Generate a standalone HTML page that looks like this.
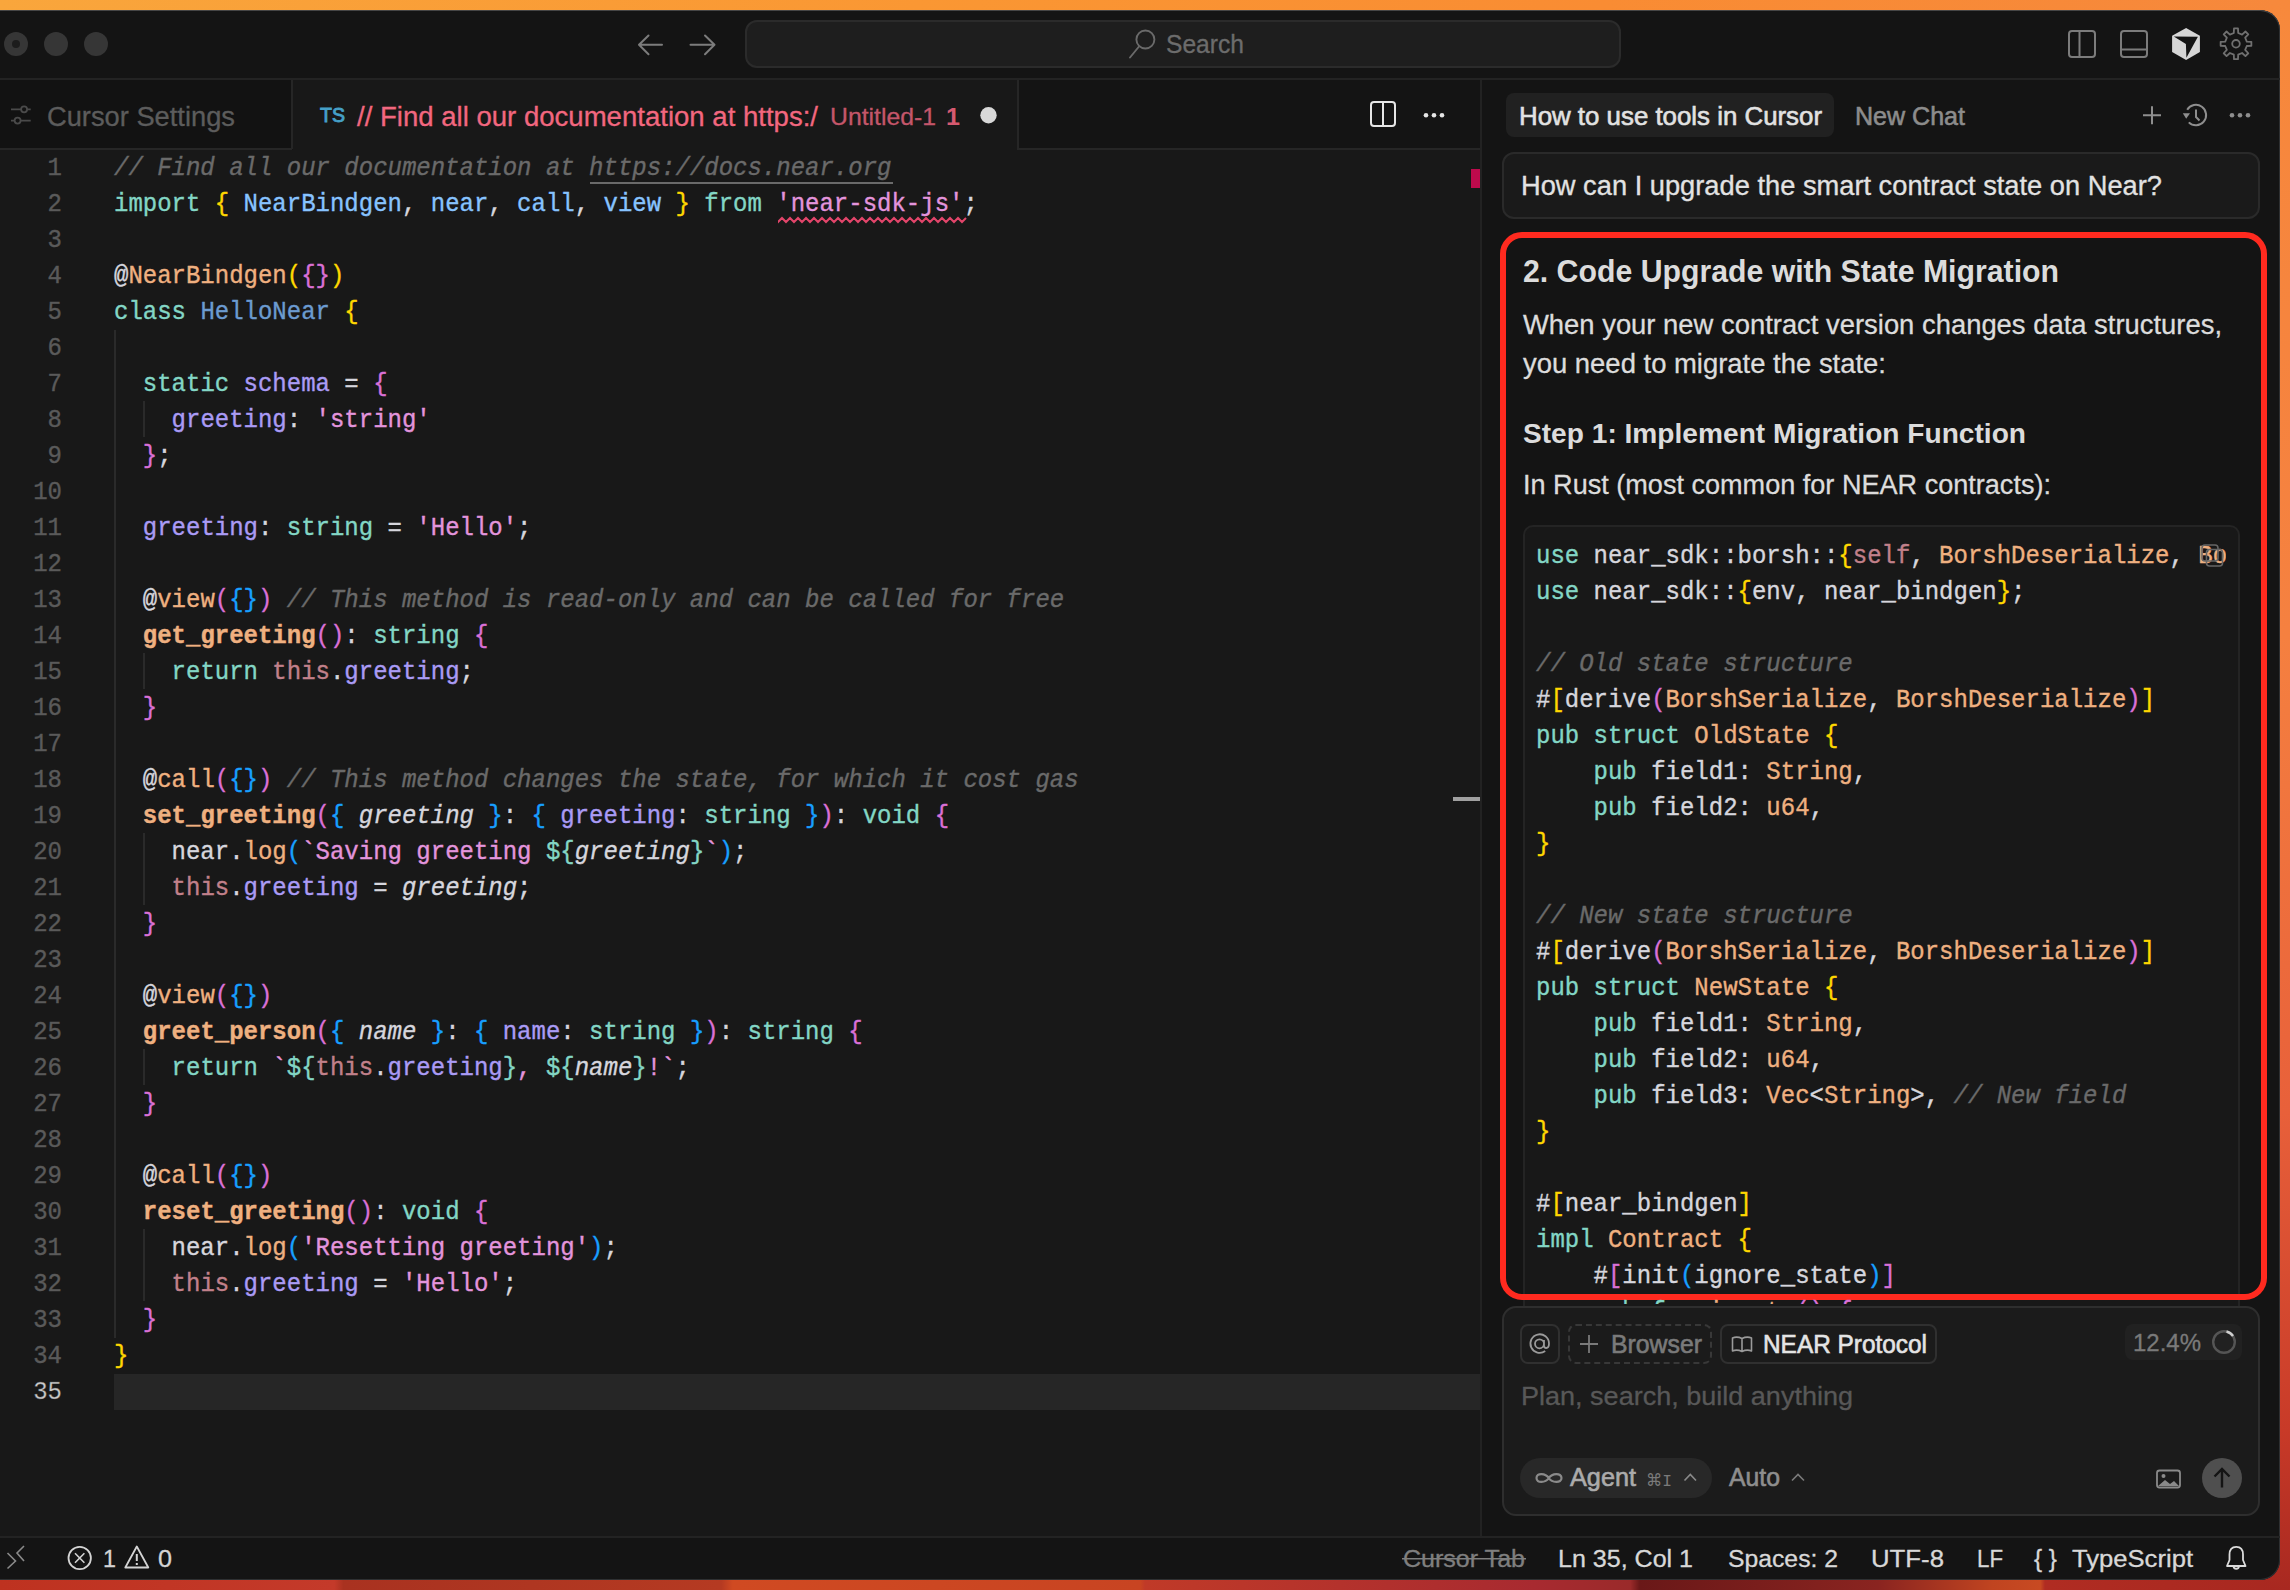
<!DOCTYPE html>
<html><head><meta charset="utf-8"><style>
html,body{margin:0;padding:0;width:2290px;height:1590px;overflow:hidden;background:#141414}
body{position:relative;font-family:"Liberation Sans",sans-serif}
</style></head><body>
<div style="position:absolute;left:0;top:0;width:2290px;height:1590px;background:linear-gradient(90deg,#f9a63c 0%,#fa9733 40%,#f98c33 70%,#f6883c 100%)"></div><div style="position:absolute;left:0;top:1560px;width:2290px;height:30px;background:linear-gradient(90deg,#be3220 0%,#c43a2a 14.6%,#a93220 15%,#b53a22 31.5%,#d04a22 32%,#c84422 49.8%,#c03a28 50%,#a82a30 67%,#9a2a2a 71.2%,#6a1818 71.6%,#8a2420 82%,#c04420 87%,#c84a22 89.1%,#b02c22 89.3%,#a82820 100%)"></div><div style="position:absolute;left:2270px;top:0;width:20px;height:1590px;background:linear-gradient(180deg,#f7893c 0%,#f58040 40%,#e8603a 70%,#c83a28 90%,#a82820 100%)"></div><div style="position:absolute;left:-30px;top:10px;width:2310px;height:1570px;background:#141414;border-radius:20px;overflow:hidden;box-shadow:inset 0 1px 0 0 #454545,inset 0 0 0 1px #2e3032"></div><div style="position:absolute;left:0px;top:78px;width:2280px;height:2px;background:#232323"></div><div style="position:absolute;left:4px;top:32px;width:24px;height:24px;background:#363636;border-radius:50%"></div><div style="position:absolute;left:44px;top:32px;width:24px;height:24px;background:#363636;border-radius:50%"></div><div style="position:absolute;left:84px;top:32px;width:24px;height:24px;background:#363636;border-radius:50%"></div><div style="position:absolute;left:12px;top:40px;width:8px;height:8px;background:#1c1c1c;border-radius:50%"></div><div style="position:absolute;left:745px;top:20px;width:876px;height:48px;background:#1e1e1e;border:2px solid #2b2b2b;border-radius:12px;box-sizing:border-box"></div><div style="position:absolute;left:0px;top:80px;width:292px;height:69px;background:#121212"></div><div style="position:absolute;left:291px;top:80px;width:2px;height:69px;background:#262626"></div><div style="position:absolute;left:0px;top:148px;width:292px;height:2px;background:#262626"></div><div style="position:absolute;left:293px;top:80px;width:725px;height:70px;background:#181818"></div><div style="position:absolute;left:1018px;top:148px;width:464px;height:2px;background:#262626"></div><div style="position:absolute;left:1017px;top:80px;width:2px;height:70px;background:#262626"></div><div style="position:absolute;left:0px;top:150px;width:1480px;height:1387px;background:#181818"></div><div style="position:absolute;left:114px;top:1374px;width:1366px;height:36px;background:#262626"></div><div style="position:absolute;left:1480px;top:80px;width:2px;height:1457px;background:#222222"></div><div style="position:absolute;left:0px;top:1536px;width:2280px;height:2px;background:#232323"></div><div style="position:absolute;left:114px;top:330px;width:2px;height:1008px;background:#2a2a2a"></div><div style="position:absolute;left:143px;top:401px;width:2px;height:36px;background:#2a2a2a"></div><div style="position:absolute;left:143px;top:653px;width:2px;height:36px;background:#2a2a2a"></div><div style="position:absolute;left:143px;top:833px;width:2px;height:72px;background:#2a2a2a"></div><div style="position:absolute;left:143px;top:1049px;width:2px;height:36px;background:#2a2a2a"></div><div style="position:absolute;left:143px;top:1229px;width:2px;height:72px;background:#2a2a2a"></div><div style="position:absolute;left:590px;top:182px;width:303px;height:2px;background:#6a6a6a"></div><svg style="position:absolute;left:778px;top:216px" width="190" height="8"><path d="M0 5 L0 6 L4 2 L8 6 L12 2 L16 6 L20 2 L24 6 L28 2 L32 6 L36 2 L40 6 L44 2 L48 6 L52 2 L56 6 L60 2 L64 6 L68 2 L72 6 L76 2 L80 6 L84 2 L88 6 L92 2 L96 6 L100 2 L104 6 L108 2 L112 6 L116 2 L120 6 L124 2 L128 6 L132 2 L136 6 L140 2 L144 6 L148 2 L152 6 L156 2 L160 6 L164 2 L168 6 L172 2 L176 6 L180 2 L184 6 L188 2" stroke="#e2456a" stroke-width="2" fill="none"/></svg><div style="position:absolute;left:1471px;top:169px;width:9px;height:19px;background:#be0a4c"></div><div style="position:absolute;left:1453px;top:797px;width:27px;height:4px;background:#a0a0a0"></div><div style="position:absolute;left:1506px;top:93px;width:328px;height:44px;background:#212121;border-radius:8px"></div><div style="position:absolute;left:1502px;top:152px;width:758px;height:67px;background:#1a1a1a;border:2px solid #2a2a2a;border-radius:12px;box-sizing:border-box"></div><div style="position:absolute;left:1523px;top:525px;width:717px;height:800px;background:#181818;border:2px solid #242424;border-radius:10px;box-sizing:border-box"></div><div style="position:absolute;left:1500px;top:232px;width:767px;height:1068px;border:6px solid #ff2a1f;border-radius:22px;box-sizing:border-box"></div><div style="position:absolute;left:1502px;top:1306px;width:758px;height:210px;background:#1b1b1b;border:2px solid #2e2e2e;border-radius:14px;box-sizing:border-box"></div><div style="position:absolute;left:1520px;top:1324px;width:40px;height:40px;border:2px solid #303030;border-radius:8px;box-sizing:border-box"></div><div style="position:absolute;left:1568px;top:1324px;width:144px;height:40px;border:2px dashed #383838;border-radius:8px;box-sizing:border-box"></div><div style="position:absolute;left:1720px;top:1324px;width:217px;height:40px;border:2px solid #303030;border-radius:8px;box-sizing:border-box"></div><div style="position:absolute;left:2125px;top:1324px;width:117px;height:36px;background:#212121;border-radius:8px"></div><div style="position:absolute;left:1520px;top:1458px;width:192px;height:40px;background:#282828;border-radius:20px"></div><div style="position:absolute;left:2202px;top:1458px;width:40px;height:40px;background:#4f4f4f;border-radius:50%"></div></div>
<svg style="position:absolute;left:0;top:0;z-index:10" width="2290" height="1590">
<defs><clipPath id="chatclip"><rect x="1500" y="150" width="726" height="1154"/></clipPath></defs>
<text x="62" y="175" font-family="Liberation Mono" font-size="24" fill="#5a5a5a" font-weight="400" text-anchor="end" transform="matrix(1 0 0 1.08 0 -14.00)" stroke="#5a5a5a" stroke-width="0.35">1</text><g><text x="114" y="175" transform="matrix(1 0 0 1.08 0 -14.00)" font-family="Liberation Mono" font-size="24" stroke-width="0.35" style="text-decoration-skip-ink:none" xml:space="preserve"><tspan fill="#6a6a6a" stroke="#6a6a6a" font-style="italic">// Find all our documentation at </tspan><tspan fill="#6a6a6a" stroke="#6a6a6a" font-style="italic">https://docs.near.org</tspan></text></g><text x="62" y="211" font-family="Liberation Mono" font-size="24" fill="#5a5a5a" font-weight="400" text-anchor="end" transform="matrix(1 0 0 1.08 0 -16.88)" stroke="#5a5a5a" stroke-width="0.35">2</text><g><text x="114" y="211" transform="matrix(1 0 0 1.08 0 -16.88)" font-family="Liberation Mono" font-size="24" stroke-width="0.35" style="text-decoration-skip-ink:none" xml:space="preserve"><tspan fill="#83d6c5" stroke="#83d6c5">import</tspan><tspan fill="#d6d6dd" stroke="#d6d6dd"> </tspan><tspan fill="#ffd700" stroke="#ffd700">{</tspan><tspan fill="#d6d6dd" stroke="#d6d6dd"> </tspan><tspan fill="#87c3ff" stroke="#87c3ff">NearBindgen</tspan><tspan fill="#d6d6dd" stroke="#d6d6dd">, </tspan><tspan fill="#87c3ff" stroke="#87c3ff">near</tspan><tspan fill="#d6d6dd" stroke="#d6d6dd">, </tspan><tspan fill="#87c3ff" stroke="#87c3ff">call</tspan><tspan fill="#d6d6dd" stroke="#d6d6dd">, </tspan><tspan fill="#87c3ff" stroke="#87c3ff">view</tspan><tspan fill="#d6d6dd" stroke="#d6d6dd"> </tspan><tspan fill="#ffd700" stroke="#ffd700">}</tspan><tspan fill="#d6d6dd" stroke="#d6d6dd"> </tspan><tspan fill="#83d6c5" stroke="#83d6c5">from</tspan><tspan fill="#d6d6dd" stroke="#d6d6dd"> </tspan><tspan fill="#e394dc" stroke="#e394dc">&#x27;near-sdk-js&#x27;</tspan><tspan fill="#d6d6dd" stroke="#d6d6dd">;</tspan></text></g><text x="62" y="247" font-family="Liberation Mono" font-size="24" fill="#5a5a5a" font-weight="400" text-anchor="end" transform="matrix(1 0 0 1.08 0 -19.76)" stroke="#5a5a5a" stroke-width="0.35">3</text><text x="62" y="283" font-family="Liberation Mono" font-size="24" fill="#5a5a5a" font-weight="400" text-anchor="end" transform="matrix(1 0 0 1.08 0 -22.64)" stroke="#5a5a5a" stroke-width="0.35">4</text><g><text x="114" y="283" transform="matrix(1 0 0 1.08 0 -22.64)" font-family="Liberation Mono" font-size="24" stroke-width="0.35" style="text-decoration-skip-ink:none" xml:space="preserve"><tspan fill="#d6d6dd" stroke="#d6d6dd">@</tspan><tspan fill="#efb080" stroke="#efb080">NearBindgen</tspan><tspan fill="#ffd700" stroke="#ffd700">(</tspan><tspan fill="#da70d6" stroke="#da70d6">{</tspan><tspan fill="#da70d6" stroke="#da70d6">}</tspan><tspan fill="#ffd700" stroke="#ffd700">)</tspan></text></g><text x="62" y="319" font-family="Liberation Mono" font-size="24" fill="#5a5a5a" font-weight="400" text-anchor="end" transform="matrix(1 0 0 1.08 0 -25.52)" stroke="#5a5a5a" stroke-width="0.35">5</text><g><text x="114" y="319" transform="matrix(1 0 0 1.08 0 -25.52)" font-family="Liberation Mono" font-size="24" stroke-width="0.35" style="text-decoration-skip-ink:none" xml:space="preserve"><tspan fill="#83d6c5" stroke="#83d6c5">class</tspan><tspan fill="#d6d6dd" stroke="#d6d6dd"> </tspan><tspan fill="#6b9bd0" stroke="#6b9bd0">HelloNear</tspan><tspan fill="#d6d6dd" stroke="#d6d6dd"> </tspan><tspan fill="#ffd700" stroke="#ffd700">{</tspan></text></g><text x="62" y="355" font-family="Liberation Mono" font-size="24" fill="#5a5a5a" font-weight="400" text-anchor="end" transform="matrix(1 0 0 1.08 0 -28.40)" stroke="#5a5a5a" stroke-width="0.35">6</text><text x="62" y="391" font-family="Liberation Mono" font-size="24" fill="#5a5a5a" font-weight="400" text-anchor="end" transform="matrix(1 0 0 1.08 0 -31.28)" stroke="#5a5a5a" stroke-width="0.35">7</text><g><text x="114" y="391" transform="matrix(1 0 0 1.08 0 -31.28)" font-family="Liberation Mono" font-size="24" stroke-width="0.35" style="text-decoration-skip-ink:none" xml:space="preserve"><tspan fill="#d6d6dd" stroke="#d6d6dd">  </tspan><tspan fill="#83d6c5" stroke="#83d6c5">static</tspan><tspan fill="#d6d6dd" stroke="#d6d6dd"> </tspan><tspan fill="#aa9bf5" stroke="#aa9bf5">schema</tspan><tspan fill="#d6d6dd" stroke="#d6d6dd"> = </tspan><tspan fill="#da70d6" stroke="#da70d6">{</tspan></text></g><text x="62" y="427" font-family="Liberation Mono" font-size="24" fill="#5a5a5a" font-weight="400" text-anchor="end" transform="matrix(1 0 0 1.08 0 -34.16)" stroke="#5a5a5a" stroke-width="0.35">8</text><g><text x="114" y="427" transform="matrix(1 0 0 1.08 0 -34.16)" font-family="Liberation Mono" font-size="24" stroke-width="0.35" style="text-decoration-skip-ink:none" xml:space="preserve"><tspan fill="#d6d6dd" stroke="#d6d6dd">    </tspan><tspan fill="#aa9bf5" stroke="#aa9bf5">greeting</tspan><tspan fill="#d6d6dd" stroke="#d6d6dd">: </tspan><tspan fill="#e394dc" stroke="#e394dc">&#x27;string&#x27;</tspan></text></g><text x="62" y="463" font-family="Liberation Mono" font-size="24" fill="#5a5a5a" font-weight="400" text-anchor="end" transform="matrix(1 0 0 1.08 0 -37.04)" stroke="#5a5a5a" stroke-width="0.35">9</text><g><text x="114" y="463" transform="matrix(1 0 0 1.08 0 -37.04)" font-family="Liberation Mono" font-size="24" stroke-width="0.35" style="text-decoration-skip-ink:none" xml:space="preserve"><tspan fill="#d6d6dd" stroke="#d6d6dd">  </tspan><tspan fill="#da70d6" stroke="#da70d6">}</tspan><tspan fill="#d6d6dd" stroke="#d6d6dd">;</tspan></text></g><text x="62" y="499" font-family="Liberation Mono" font-size="24" fill="#5a5a5a" font-weight="400" text-anchor="end" transform="matrix(1 0 0 1.08 0 -39.92)" stroke="#5a5a5a" stroke-width="0.35">10</text><text x="62" y="535" font-family="Liberation Mono" font-size="24" fill="#5a5a5a" font-weight="400" text-anchor="end" transform="matrix(1 0 0 1.08 0 -42.80)" stroke="#5a5a5a" stroke-width="0.35">11</text><g><text x="114" y="535" transform="matrix(1 0 0 1.08 0 -42.80)" font-family="Liberation Mono" font-size="24" stroke-width="0.35" style="text-decoration-skip-ink:none" xml:space="preserve"><tspan fill="#d6d6dd" stroke="#d6d6dd">  </tspan><tspan fill="#aa9bf5" stroke="#aa9bf5">greeting</tspan><tspan fill="#d6d6dd" stroke="#d6d6dd">: </tspan><tspan fill="#83d6c5" stroke="#83d6c5">string</tspan><tspan fill="#d6d6dd" stroke="#d6d6dd"> = </tspan><tspan fill="#e394dc" stroke="#e394dc">&#x27;Hello&#x27;</tspan><tspan fill="#d6d6dd" stroke="#d6d6dd">;</tspan></text></g><text x="62" y="571" font-family="Liberation Mono" font-size="24" fill="#5a5a5a" font-weight="400" text-anchor="end" transform="matrix(1 0 0 1.08 0 -45.68)" stroke="#5a5a5a" stroke-width="0.35">12</text><text x="62" y="607" font-family="Liberation Mono" font-size="24" fill="#5a5a5a" font-weight="400" text-anchor="end" transform="matrix(1 0 0 1.08 0 -48.56)" stroke="#5a5a5a" stroke-width="0.35">13</text><g><text x="114" y="607" transform="matrix(1 0 0 1.08 0 -48.56)" font-family="Liberation Mono" font-size="24" stroke-width="0.35" style="text-decoration-skip-ink:none" xml:space="preserve"><tspan fill="#d6d6dd" stroke="#d6d6dd">  @</tspan><tspan fill="#efb080" stroke="#efb080">view</tspan><tspan fill="#da70d6" stroke="#da70d6">(</tspan><tspan fill="#179fff" stroke="#179fff">{}</tspan><tspan fill="#da70d6" stroke="#da70d6">)</tspan><tspan fill="#d6d6dd" stroke="#d6d6dd"> </tspan><tspan fill="#6a6a6a" stroke="#6a6a6a" font-style="italic">// This method is read-only and can be called for free</tspan></text></g><text x="62" y="643" font-family="Liberation Mono" font-size="24" fill="#5a5a5a" font-weight="400" text-anchor="end" transform="matrix(1 0 0 1.08 0 -51.44)" stroke="#5a5a5a" stroke-width="0.35">14</text><g><text x="114" y="643" transform="matrix(1 0 0 1.08 0 -51.44)" font-family="Liberation Mono" font-size="24" stroke-width="0.35" style="text-decoration-skip-ink:none" xml:space="preserve"><tspan fill="#d6d6dd" stroke="#d6d6dd">  </tspan><tspan fill="#efb080" stroke="#efb080" font-weight="700">get_greeting</tspan><tspan fill="#da70d6" stroke="#da70d6">()</tspan><tspan fill="#d6d6dd" stroke="#d6d6dd">: </tspan><tspan fill="#83d6c5" stroke="#83d6c5">string</tspan><tspan fill="#d6d6dd" stroke="#d6d6dd"> </tspan><tspan fill="#da70d6" stroke="#da70d6">{</tspan></text></g><text x="62" y="679" font-family="Liberation Mono" font-size="24" fill="#5a5a5a" font-weight="400" text-anchor="end" transform="matrix(1 0 0 1.08 0 -54.32)" stroke="#5a5a5a" stroke-width="0.35">15</text><g><text x="114" y="679" transform="matrix(1 0 0 1.08 0 -54.32)" font-family="Liberation Mono" font-size="24" stroke-width="0.35" style="text-decoration-skip-ink:none" xml:space="preserve"><tspan fill="#d6d6dd" stroke="#d6d6dd">    </tspan><tspan fill="#83d6c5" stroke="#83d6c5">return</tspan><tspan fill="#d6d6dd" stroke="#d6d6dd"> </tspan><tspan fill="#c1808a" stroke="#c1808a">this</tspan><tspan fill="#d6d6dd" stroke="#d6d6dd">.</tspan><tspan fill="#aa9bf5" stroke="#aa9bf5">greeting</tspan><tspan fill="#d6d6dd" stroke="#d6d6dd">;</tspan></text></g><text x="62" y="715" font-family="Liberation Mono" font-size="24" fill="#5a5a5a" font-weight="400" text-anchor="end" transform="matrix(1 0 0 1.08 0 -57.20)" stroke="#5a5a5a" stroke-width="0.35">16</text><g><text x="114" y="715" transform="matrix(1 0 0 1.08 0 -57.20)" font-family="Liberation Mono" font-size="24" stroke-width="0.35" style="text-decoration-skip-ink:none" xml:space="preserve"><tspan fill="#d6d6dd" stroke="#d6d6dd">  </tspan><tspan fill="#da70d6" stroke="#da70d6">}</tspan></text></g><text x="62" y="751" font-family="Liberation Mono" font-size="24" fill="#5a5a5a" font-weight="400" text-anchor="end" transform="matrix(1 0 0 1.08 0 -60.08)" stroke="#5a5a5a" stroke-width="0.35">17</text><text x="62" y="787" font-family="Liberation Mono" font-size="24" fill="#5a5a5a" font-weight="400" text-anchor="end" transform="matrix(1 0 0 1.08 0 -62.96)" stroke="#5a5a5a" stroke-width="0.35">18</text><g><text x="114" y="787" transform="matrix(1 0 0 1.08 0 -62.96)" font-family="Liberation Mono" font-size="24" stroke-width="0.35" style="text-decoration-skip-ink:none" xml:space="preserve"><tspan fill="#d6d6dd" stroke="#d6d6dd">  @</tspan><tspan fill="#efb080" stroke="#efb080">call</tspan><tspan fill="#da70d6" stroke="#da70d6">(</tspan><tspan fill="#179fff" stroke="#179fff">{}</tspan><tspan fill="#da70d6" stroke="#da70d6">)</tspan><tspan fill="#d6d6dd" stroke="#d6d6dd"> </tspan><tspan fill="#6a6a6a" stroke="#6a6a6a" font-style="italic">// This method changes the state, for which it cost gas</tspan></text></g><text x="62" y="823" font-family="Liberation Mono" font-size="24" fill="#5a5a5a" font-weight="400" text-anchor="end" transform="matrix(1 0 0 1.08 0 -65.84)" stroke="#5a5a5a" stroke-width="0.35">19</text><g><text x="114" y="823" transform="matrix(1 0 0 1.08 0 -65.84)" font-family="Liberation Mono" font-size="24" stroke-width="0.35" style="text-decoration-skip-ink:none" xml:space="preserve"><tspan fill="#d6d6dd" stroke="#d6d6dd">  </tspan><tspan fill="#efb080" stroke="#efb080" font-weight="700">set_greeting</tspan><tspan fill="#da70d6" stroke="#da70d6">(</tspan><tspan fill="#179fff" stroke="#179fff">{</tspan><tspan fill="#d6d6dd" stroke="#d6d6dd"> </tspan><tspan fill="#d6d6dd" stroke="#d6d6dd" font-style="italic">greeting</tspan><tspan fill="#d6d6dd" stroke="#d6d6dd"> </tspan><tspan fill="#179fff" stroke="#179fff">}</tspan><tspan fill="#d6d6dd" stroke="#d6d6dd">: </tspan><tspan fill="#179fff" stroke="#179fff">{</tspan><tspan fill="#d6d6dd" stroke="#d6d6dd"> </tspan><tspan fill="#aa9bf5" stroke="#aa9bf5">greeting</tspan><tspan fill="#d6d6dd" stroke="#d6d6dd">: </tspan><tspan fill="#83d6c5" stroke="#83d6c5">string</tspan><tspan fill="#d6d6dd" stroke="#d6d6dd"> </tspan><tspan fill="#179fff" stroke="#179fff">}</tspan><tspan fill="#da70d6" stroke="#da70d6">)</tspan><tspan fill="#d6d6dd" stroke="#d6d6dd">: </tspan><tspan fill="#83d6c5" stroke="#83d6c5">void</tspan><tspan fill="#d6d6dd" stroke="#d6d6dd"> </tspan><tspan fill="#da70d6" stroke="#da70d6">{</tspan></text></g><text x="62" y="859" font-family="Liberation Mono" font-size="24" fill="#5a5a5a" font-weight="400" text-anchor="end" transform="matrix(1 0 0 1.08 0 -68.72)" stroke="#5a5a5a" stroke-width="0.35">20</text><g><text x="114" y="859" transform="matrix(1 0 0 1.08 0 -68.72)" font-family="Liberation Mono" font-size="24" stroke-width="0.35" style="text-decoration-skip-ink:none" xml:space="preserve"><tspan fill="#d6d6dd" stroke="#d6d6dd">    near.</tspan><tspan fill="#efb080" stroke="#efb080">log</tspan><tspan fill="#179fff" stroke="#179fff">(</tspan><tspan fill="#e394dc" stroke="#e394dc">`Saving greeting </tspan><tspan fill="#83d6c5" stroke="#83d6c5">${</tspan><tspan fill="#d6d6dd" stroke="#d6d6dd" font-style="italic">greeting</tspan><tspan fill="#83d6c5" stroke="#83d6c5">}</tspan><tspan fill="#e394dc" stroke="#e394dc">`</tspan><tspan fill="#179fff" stroke="#179fff">)</tspan><tspan fill="#d6d6dd" stroke="#d6d6dd">;</tspan></text></g><text x="62" y="895" font-family="Liberation Mono" font-size="24" fill="#5a5a5a" font-weight="400" text-anchor="end" transform="matrix(1 0 0 1.08 0 -71.60)" stroke="#5a5a5a" stroke-width="0.35">21</text><g><text x="114" y="895" transform="matrix(1 0 0 1.08 0 -71.60)" font-family="Liberation Mono" font-size="24" stroke-width="0.35" style="text-decoration-skip-ink:none" xml:space="preserve"><tspan fill="#d6d6dd" stroke="#d6d6dd">    </tspan><tspan fill="#c1808a" stroke="#c1808a">this</tspan><tspan fill="#d6d6dd" stroke="#d6d6dd">.</tspan><tspan fill="#aa9bf5" stroke="#aa9bf5">greeting</tspan><tspan fill="#d6d6dd" stroke="#d6d6dd"> = </tspan><tspan fill="#d6d6dd" stroke="#d6d6dd" font-style="italic">greeting</tspan><tspan fill="#d6d6dd" stroke="#d6d6dd">;</tspan></text></g><text x="62" y="931" font-family="Liberation Mono" font-size="24" fill="#5a5a5a" font-weight="400" text-anchor="end" transform="matrix(1 0 0 1.08 0 -74.48)" stroke="#5a5a5a" stroke-width="0.35">22</text><g><text x="114" y="931" transform="matrix(1 0 0 1.08 0 -74.48)" font-family="Liberation Mono" font-size="24" stroke-width="0.35" style="text-decoration-skip-ink:none" xml:space="preserve"><tspan fill="#d6d6dd" stroke="#d6d6dd">  </tspan><tspan fill="#da70d6" stroke="#da70d6">}</tspan></text></g><text x="62" y="967" font-family="Liberation Mono" font-size="24" fill="#5a5a5a" font-weight="400" text-anchor="end" transform="matrix(1 0 0 1.08 0 -77.36)" stroke="#5a5a5a" stroke-width="0.35">23</text><text x="62" y="1003" font-family="Liberation Mono" font-size="24" fill="#5a5a5a" font-weight="400" text-anchor="end" transform="matrix(1 0 0 1.08 0 -80.24)" stroke="#5a5a5a" stroke-width="0.35">24</text><g><text x="114" y="1003" transform="matrix(1 0 0 1.08 0 -80.24)" font-family="Liberation Mono" font-size="24" stroke-width="0.35" style="text-decoration-skip-ink:none" xml:space="preserve"><tspan fill="#d6d6dd" stroke="#d6d6dd">  @</tspan><tspan fill="#efb080" stroke="#efb080">view</tspan><tspan fill="#da70d6" stroke="#da70d6">(</tspan><tspan fill="#179fff" stroke="#179fff">{}</tspan><tspan fill="#da70d6" stroke="#da70d6">)</tspan></text></g><text x="62" y="1039" font-family="Liberation Mono" font-size="24" fill="#5a5a5a" font-weight="400" text-anchor="end" transform="matrix(1 0 0 1.08 0 -83.12)" stroke="#5a5a5a" stroke-width="0.35">25</text><g><text x="114" y="1039" transform="matrix(1 0 0 1.08 0 -83.12)" font-family="Liberation Mono" font-size="24" stroke-width="0.35" style="text-decoration-skip-ink:none" xml:space="preserve"><tspan fill="#d6d6dd" stroke="#d6d6dd">  </tspan><tspan fill="#efb080" stroke="#efb080" font-weight="700">greet_person</tspan><tspan fill="#da70d6" stroke="#da70d6">(</tspan><tspan fill="#179fff" stroke="#179fff">{</tspan><tspan fill="#d6d6dd" stroke="#d6d6dd"> </tspan><tspan fill="#d6d6dd" stroke="#d6d6dd" font-style="italic">name</tspan><tspan fill="#d6d6dd" stroke="#d6d6dd"> </tspan><tspan fill="#179fff" stroke="#179fff">}</tspan><tspan fill="#d6d6dd" stroke="#d6d6dd">: </tspan><tspan fill="#179fff" stroke="#179fff">{</tspan><tspan fill="#d6d6dd" stroke="#d6d6dd"> </tspan><tspan fill="#aa9bf5" stroke="#aa9bf5">name</tspan><tspan fill="#d6d6dd" stroke="#d6d6dd">: </tspan><tspan fill="#83d6c5" stroke="#83d6c5">string</tspan><tspan fill="#d6d6dd" stroke="#d6d6dd"> </tspan><tspan fill="#179fff" stroke="#179fff">}</tspan><tspan fill="#da70d6" stroke="#da70d6">)</tspan><tspan fill="#d6d6dd" stroke="#d6d6dd">: </tspan><tspan fill="#83d6c5" stroke="#83d6c5">string</tspan><tspan fill="#d6d6dd" stroke="#d6d6dd"> </tspan><tspan fill="#da70d6" stroke="#da70d6">{</tspan></text></g><text x="62" y="1075" font-family="Liberation Mono" font-size="24" fill="#5a5a5a" font-weight="400" text-anchor="end" transform="matrix(1 0 0 1.08 0 -86.00)" stroke="#5a5a5a" stroke-width="0.35">26</text><g><text x="114" y="1075" transform="matrix(1 0 0 1.08 0 -86.00)" font-family="Liberation Mono" font-size="24" stroke-width="0.35" style="text-decoration-skip-ink:none" xml:space="preserve"><tspan fill="#d6d6dd" stroke="#d6d6dd">    </tspan><tspan fill="#83d6c5" stroke="#83d6c5">return</tspan><tspan fill="#d6d6dd" stroke="#d6d6dd"> </tspan><tspan fill="#e394dc" stroke="#e394dc">`</tspan><tspan fill="#83d6c5" stroke="#83d6c5">${</tspan><tspan fill="#c1808a" stroke="#c1808a">this</tspan><tspan fill="#d6d6dd" stroke="#d6d6dd">.</tspan><tspan fill="#aa9bf5" stroke="#aa9bf5">greeting</tspan><tspan fill="#83d6c5" stroke="#83d6c5">}</tspan><tspan fill="#e394dc" stroke="#e394dc">, </tspan><tspan fill="#83d6c5" stroke="#83d6c5">${</tspan><tspan fill="#d6d6dd" stroke="#d6d6dd" font-style="italic">name</tspan><tspan fill="#83d6c5" stroke="#83d6c5">}</tspan><tspan fill="#e394dc" stroke="#e394dc">!`</tspan><tspan fill="#d6d6dd" stroke="#d6d6dd">;</tspan></text></g><text x="62" y="1111" font-family="Liberation Mono" font-size="24" fill="#5a5a5a" font-weight="400" text-anchor="end" transform="matrix(1 0 0 1.08 0 -88.88)" stroke="#5a5a5a" stroke-width="0.35">27</text><g><text x="114" y="1111" transform="matrix(1 0 0 1.08 0 -88.88)" font-family="Liberation Mono" font-size="24" stroke-width="0.35" style="text-decoration-skip-ink:none" xml:space="preserve"><tspan fill="#d6d6dd" stroke="#d6d6dd">  </tspan><tspan fill="#da70d6" stroke="#da70d6">}</tspan></text></g><text x="62" y="1147" font-family="Liberation Mono" font-size="24" fill="#5a5a5a" font-weight="400" text-anchor="end" transform="matrix(1 0 0 1.08 0 -91.76)" stroke="#5a5a5a" stroke-width="0.35">28</text><text x="62" y="1183" font-family="Liberation Mono" font-size="24" fill="#5a5a5a" font-weight="400" text-anchor="end" transform="matrix(1 0 0 1.08 0 -94.64)" stroke="#5a5a5a" stroke-width="0.35">29</text><g><text x="114" y="1183" transform="matrix(1 0 0 1.08 0 -94.64)" font-family="Liberation Mono" font-size="24" stroke-width="0.35" style="text-decoration-skip-ink:none" xml:space="preserve"><tspan fill="#d6d6dd" stroke="#d6d6dd">  @</tspan><tspan fill="#efb080" stroke="#efb080">call</tspan><tspan fill="#da70d6" stroke="#da70d6">(</tspan><tspan fill="#179fff" stroke="#179fff">{}</tspan><tspan fill="#da70d6" stroke="#da70d6">)</tspan></text></g><text x="62" y="1219" font-family="Liberation Mono" font-size="24" fill="#5a5a5a" font-weight="400" text-anchor="end" transform="matrix(1 0 0 1.08 0 -97.52)" stroke="#5a5a5a" stroke-width="0.35">30</text><g><text x="114" y="1219" transform="matrix(1 0 0 1.08 0 -97.52)" font-family="Liberation Mono" font-size="24" stroke-width="0.35" style="text-decoration-skip-ink:none" xml:space="preserve"><tspan fill="#d6d6dd" stroke="#d6d6dd">  </tspan><tspan fill="#efb080" stroke="#efb080" font-weight="700">reset_greeting</tspan><tspan fill="#da70d6" stroke="#da70d6">()</tspan><tspan fill="#d6d6dd" stroke="#d6d6dd">: </tspan><tspan fill="#83d6c5" stroke="#83d6c5">void</tspan><tspan fill="#d6d6dd" stroke="#d6d6dd"> </tspan><tspan fill="#da70d6" stroke="#da70d6">{</tspan></text></g><text x="62" y="1255" font-family="Liberation Mono" font-size="24" fill="#5a5a5a" font-weight="400" text-anchor="end" transform="matrix(1 0 0 1.08 0 -100.40)" stroke="#5a5a5a" stroke-width="0.35">31</text><g><text x="114" y="1255" transform="matrix(1 0 0 1.08 0 -100.40)" font-family="Liberation Mono" font-size="24" stroke-width="0.35" style="text-decoration-skip-ink:none" xml:space="preserve"><tspan fill="#d6d6dd" stroke="#d6d6dd">    near.</tspan><tspan fill="#efb080" stroke="#efb080">log</tspan><tspan fill="#179fff" stroke="#179fff">(</tspan><tspan fill="#e394dc" stroke="#e394dc">&#x27;Resetting greeting&#x27;</tspan><tspan fill="#179fff" stroke="#179fff">)</tspan><tspan fill="#d6d6dd" stroke="#d6d6dd">;</tspan></text></g><text x="62" y="1291" font-family="Liberation Mono" font-size="24" fill="#5a5a5a" font-weight="400" text-anchor="end" transform="matrix(1 0 0 1.08 0 -103.28)" stroke="#5a5a5a" stroke-width="0.35">32</text><g><text x="114" y="1291" transform="matrix(1 0 0 1.08 0 -103.28)" font-family="Liberation Mono" font-size="24" stroke-width="0.35" style="text-decoration-skip-ink:none" xml:space="preserve"><tspan fill="#d6d6dd" stroke="#d6d6dd">    </tspan><tspan fill="#c1808a" stroke="#c1808a">this</tspan><tspan fill="#d6d6dd" stroke="#d6d6dd">.</tspan><tspan fill="#aa9bf5" stroke="#aa9bf5">greeting</tspan><tspan fill="#d6d6dd" stroke="#d6d6dd"> = </tspan><tspan fill="#e394dc" stroke="#e394dc">&#x27;Hello&#x27;</tspan><tspan fill="#d6d6dd" stroke="#d6d6dd">;</tspan></text></g><text x="62" y="1327" font-family="Liberation Mono" font-size="24" fill="#5a5a5a" font-weight="400" text-anchor="end" transform="matrix(1 0 0 1.08 0 -106.16)" stroke="#5a5a5a" stroke-width="0.35">33</text><g><text x="114" y="1327" transform="matrix(1 0 0 1.08 0 -106.16)" font-family="Liberation Mono" font-size="24" stroke-width="0.35" style="text-decoration-skip-ink:none" xml:space="preserve"><tspan fill="#d6d6dd" stroke="#d6d6dd">  </tspan><tspan fill="#da70d6" stroke="#da70d6">}</tspan></text></g><text x="62" y="1363" font-family="Liberation Mono" font-size="24" fill="#5a5a5a" font-weight="400" text-anchor="end" transform="matrix(1 0 0 1.08 0 -109.04)" stroke="#5a5a5a" stroke-width="0.35">34</text><g><text x="114" y="1363" transform="matrix(1 0 0 1.08 0 -109.04)" font-family="Liberation Mono" font-size="24" stroke-width="0.35" style="text-decoration-skip-ink:none" xml:space="preserve"><tspan fill="#ffd700" stroke="#ffd700">}</tspan></text></g><text x="62" y="1399" font-family="Liberation Mono" font-size="24" fill="#cccccc" font-weight="400" text-anchor="end" transform="matrix(1 0 0 1.08 0 -111.92)" stroke="#5a5a5a" stroke-width="0.35">35</text><text x="1166" y="53" font-family="Liberation Sans" font-size="25" fill="#6c6c6c" font-weight="400" stroke="#6c6c6c" stroke-width="0.3" textLength="78" lengthAdjust="spacingAndGlyphs" >Search</text><path d="M662 44.8H639.5M648.5 35.5L639 44.8L648.5 54.2" stroke="#7c7c7c" stroke-width="2" fill="none" stroke-linecap="round" stroke-linejoin="round"/><path d="M690.5 44.8H714M705 35.5L714.5 44.8L705 54.2" stroke="#7c7c7c" stroke-width="2" fill="none" stroke-linecap="round" stroke-linejoin="round"/><circle cx="1145.4" cy="39.5" r="9" stroke="#6a6a6a" stroke-width="1.9" fill="none"/><path d="M1139 46.5L1130 57.5" stroke="#6a6a6a" stroke-width="1.9" stroke-linecap="round"/><rect x="2069" y="31" width="26" height="26" rx="3" stroke="#7c7c7c" stroke-width="2" fill="none"/><path d="M2079.5 31V57" stroke="#7c7c7c" stroke-width="2"/><rect x="2121" y="31" width="26" height="26" rx="3" stroke="#7c7c7c" stroke-width="2" fill="none"/><path d="M2121 49.5H2147" stroke="#7c7c7c" stroke-width="2"/><path d="M2186.1 27.9L2199.9 35.7V52.1L2186.1 60.1L2172.1 52.1V35.7Z" fill="#d6d6d6"/><path d="M2173.8 36.5L2197.9 36.7L2186.4 57.8L2185.9 43.9Z" fill="#141414"/><path d="M2233.81 33.02 L2233.99 28.43 L2238.01 28.43 L2238.19 33.02 L2242.08 34.63 L2245.45 31.51 L2248.29 34.35 L2245.17 37.72 L2246.78 41.61 L2251.37 41.79 L2251.37 45.81 L2246.78 45.99 L2245.17 49.88 L2248.29 53.25 L2245.45 56.09 L2242.08 52.97 L2238.19 54.58 L2238.01 59.17 L2233.99 59.17 L2233.81 54.58 L2229.92 52.97 L2226.55 56.09 L2223.71 53.25 L2226.83 49.88 L2225.22 45.99 L2220.63 45.81 L2220.63 41.79 L2225.22 41.61 L2226.83 37.72 L2223.71 34.35 L2226.55 31.51 L2229.92 34.63Z" stroke="#707070" stroke-width="1.8" fill="none" stroke-linejoin="round"/><circle cx="2236" cy="43.8" r="3.8" stroke="#707070" stroke-width="1.8" fill="none"/><path d="M11 109.3H30.7M11 120.6H30.7" stroke="#4a4a4a" stroke-width="1.8"/><circle cx="24.1" cy="109.3" r="3" fill="#121212" stroke="#4a4a4a" stroke-width="1.8"/><circle cx="17.6" cy="120.6" r="3" fill="#121212" stroke="#4a4a4a" stroke-width="1.8"/><text x="47" y="126" font-family="Liberation Sans" font-size="27" fill="#5c5c5c" font-weight="400" stroke="#5c5c5c" stroke-width="0.3" textLength="188" lengthAdjust="spacingAndGlyphs" >Cursor Settings</text><text x="320" y="122" font-family="Liberation Sans" font-size="20" fill="#45a0c8" font-weight="400" stroke="#45a0c8" stroke-width="0.9" textLength="25" lengthAdjust="spacingAndGlyphs" >TS</text><text x="357" y="126" font-family="Liberation Sans" font-size="27" fill="#f2677f" font-weight="400" stroke="#f2677f" stroke-width="0.3" textLength="461" lengthAdjust="spacingAndGlyphs" >// Find all our documentation at https:/</text><text x="830" y="125" font-family="Liberation Sans" font-size="24" fill="#c4566a" font-weight="400" stroke="#c4566a" stroke-width="0.3" textLength="106" lengthAdjust="spacingAndGlyphs" >Untitled-1</text><text x="946" y="125" font-family="Liberation Sans" font-size="24" fill="#d65a70" font-weight="700" textLength="14" lengthAdjust="spacingAndGlyphs" >1</text><circle cx="988.5" cy="115.3" r="8.2" fill="#d8d8d8"/><rect x="1371" y="102" width="24" height="24" rx="3" stroke="#e6e6e6" stroke-width="2" fill="none"/><path d="M1383 102V126" stroke="#e6e6e6" stroke-width="2"/><circle cx="1426" cy="115.2" r="2.3" fill="#e6e6e6"/><circle cx="1434" cy="115.2" r="2.3" fill="#e6e6e6"/><circle cx="1442" cy="115.2" r="2.3" fill="#e6e6e6"/><text x="1519" y="125" font-family="Liberation Sans" font-size="26" fill="#e2e2e2" font-weight="400" stroke="#e2e2e2" stroke-width="0.6" textLength="303" lengthAdjust="spacingAndGlyphs" >How to use tools in Cursor</text><text x="1855" y="125" font-family="Liberation Sans" font-size="26" fill="#8c8c8c" font-weight="400" stroke="#8c8c8c" stroke-width="0.6" textLength="110" lengthAdjust="spacingAndGlyphs" >New Chat</text><path d="M2152 106.2V124.2M2143 115.2H2161" stroke="#8e8e8e" stroke-width="2"/><path d="M2187.2 109.8A10.2 10.2 0 1 1 2188.8 122.4" stroke="#8e8e8e" stroke-width="2" fill="none"/><path d="M2182.8 113.2L2190 113.2L2186.2 118.8Z" fill="#8e8e8e"/><path d="M2196 109.5V117L2199.5 120.5" stroke="#8e8e8e" stroke-width="2" fill="none"/><circle cx="2232" cy="115.2" r="2.3" fill="#8e8e8e"/><circle cx="2240" cy="115.2" r="2.3" fill="#8e8e8e"/><circle cx="2248" cy="115.2" r="2.3" fill="#8e8e8e"/><text x="1521" y="195" font-family="Liberation Sans" font-size="27" fill="#e2e2e2" font-weight="400" stroke="#e2e2e2" stroke-width="0.3" textLength="641" lengthAdjust="spacingAndGlyphs" >How can I upgrade the smart contract state on Near?</text><text x="1523" y="282" font-family="Liberation Sans" font-size="31" fill="#dcdcdc" font-weight="700" textLength="536" lengthAdjust="spacingAndGlyphs" >2. Code Upgrade with State Migration</text><text x="1523" y="334" font-family="Liberation Sans" font-size="27" fill="#dcdcdc" font-weight="400" stroke="#dcdcdc" stroke-width="0.3" textLength="699" lengthAdjust="spacingAndGlyphs" >When your new contract version changes data structures,</text><text x="1523" y="373" font-family="Liberation Sans" font-size="27" fill="#dcdcdc" font-weight="400" stroke="#dcdcdc" stroke-width="0.3" textLength="363" lengthAdjust="spacingAndGlyphs" >you need to migrate the state:</text><text x="1523" y="443" font-family="Liberation Sans" font-size="28" fill="#dcdcdc" font-weight="700" textLength="503" lengthAdjust="spacingAndGlyphs" >Step 1: Implement Migration Function</text><text x="1523" y="494" font-family="Liberation Sans" font-size="27" fill="#dcdcdc" font-weight="400" stroke="#dcdcdc" stroke-width="0.3" textLength="528" lengthAdjust="spacingAndGlyphs" >In Rust (most common for NEAR contracts):</text><g clip-path="url(#chatclip)"><text x="1536" y="563.5" transform="matrix(1 0 0 1.08 0 -45.08)" font-family="Liberation Mono" font-size="24" stroke-width="0.35" style="text-decoration-skip-ink:none" xml:space="preserve"><tspan fill="#83d6c5" stroke="#83d6c5">use</tspan><tspan fill="#d6d6dd" stroke="#d6d6dd"> near_sdk::borsh::</tspan><tspan fill="#ffd700" stroke="#ffd700">{</tspan><tspan fill="#c1808a" stroke="#c1808a">self</tspan><tspan fill="#d6d6dd" stroke="#d6d6dd">, </tspan><tspan fill="#efb080" stroke="#efb080">BorshDeserialize</tspan><tspan fill="#d6d6dd" stroke="#d6d6dd">, </tspan><tspan fill="#efb080" stroke="#efb080">Bo</tspan></text></g><g clip-path="url(#chatclip)"><text x="1536" y="599.5" transform="matrix(1 0 0 1.08 0 -47.96)" font-family="Liberation Mono" font-size="24" stroke-width="0.35" style="text-decoration-skip-ink:none" xml:space="preserve"><tspan fill="#83d6c5" stroke="#83d6c5">use</tspan><tspan fill="#d6d6dd" stroke="#d6d6dd"> near_sdk::</tspan><tspan fill="#ffd700" stroke="#ffd700">{</tspan><tspan fill="#d6d6dd" stroke="#d6d6dd">env, near_bindgen</tspan><tspan fill="#ffd700" stroke="#ffd700">}</tspan><tspan fill="#d6d6dd" stroke="#d6d6dd">;</tspan></text></g><g clip-path="url(#chatclip)"><text x="1536" y="671.5" transform="matrix(1 0 0 1.08 0 -53.72)" font-family="Liberation Mono" font-size="24" stroke-width="0.35" style="text-decoration-skip-ink:none" xml:space="preserve"><tspan fill="#6a6a6a" stroke="#6a6a6a" font-style="italic">// Old state structure</tspan></text></g><g clip-path="url(#chatclip)"><text x="1536" y="707.5" transform="matrix(1 0 0 1.08 0 -56.60)" font-family="Liberation Mono" font-size="24" stroke-width="0.35" style="text-decoration-skip-ink:none" xml:space="preserve"><tspan fill="#d6d6dd" stroke="#d6d6dd">#</tspan><tspan fill="#ffd700" stroke="#ffd700">[</tspan><tspan fill="#d6d6dd" stroke="#d6d6dd">derive</tspan><tspan fill="#da70d6" stroke="#da70d6">(</tspan><tspan fill="#efb080" stroke="#efb080">BorshSerialize</tspan><tspan fill="#d6d6dd" stroke="#d6d6dd">, </tspan><tspan fill="#efb080" stroke="#efb080">BorshDeserialize</tspan><tspan fill="#da70d6" stroke="#da70d6">)</tspan><tspan fill="#ffd700" stroke="#ffd700">]</tspan></text></g><g clip-path="url(#chatclip)"><text x="1536" y="743.5" transform="matrix(1 0 0 1.08 0 -59.48)" font-family="Liberation Mono" font-size="24" stroke-width="0.35" style="text-decoration-skip-ink:none" xml:space="preserve"><tspan fill="#83d6c5" stroke="#83d6c5">pub</tspan><tspan fill="#d6d6dd" stroke="#d6d6dd"> </tspan><tspan fill="#83d6c5" stroke="#83d6c5">struct</tspan><tspan fill="#d6d6dd" stroke="#d6d6dd"> </tspan><tspan fill="#efb080" stroke="#efb080">OldState</tspan><tspan fill="#d6d6dd" stroke="#d6d6dd"> </tspan><tspan fill="#ffd700" stroke="#ffd700">{</tspan></text></g><g clip-path="url(#chatclip)"><text x="1536" y="779.5" transform="matrix(1 0 0 1.08 0 -62.36)" font-family="Liberation Mono" font-size="24" stroke-width="0.35" style="text-decoration-skip-ink:none" xml:space="preserve"><tspan fill="#d6d6dd" stroke="#d6d6dd">    </tspan><tspan fill="#83d6c5" stroke="#83d6c5">pub</tspan><tspan fill="#d6d6dd" stroke="#d6d6dd"> field1: </tspan><tspan fill="#efb080" stroke="#efb080">String</tspan><tspan fill="#d6d6dd" stroke="#d6d6dd">,</tspan></text></g><g clip-path="url(#chatclip)"><text x="1536" y="815.5" transform="matrix(1 0 0 1.08 0 -65.24)" font-family="Liberation Mono" font-size="24" stroke-width="0.35" style="text-decoration-skip-ink:none" xml:space="preserve"><tspan fill="#d6d6dd" stroke="#d6d6dd">    </tspan><tspan fill="#83d6c5" stroke="#83d6c5">pub</tspan><tspan fill="#d6d6dd" stroke="#d6d6dd"> field2: </tspan><tspan fill="#efb080" stroke="#efb080">u64</tspan><tspan fill="#d6d6dd" stroke="#d6d6dd">,</tspan></text></g><g clip-path="url(#chatclip)"><text x="1536" y="851.5" transform="matrix(1 0 0 1.08 0 -68.12)" font-family="Liberation Mono" font-size="24" stroke-width="0.35" style="text-decoration-skip-ink:none" xml:space="preserve"><tspan fill="#ffd700" stroke="#ffd700">}</tspan></text></g><g clip-path="url(#chatclip)"><text x="1536" y="923.5" transform="matrix(1 0 0 1.08 0 -73.88)" font-family="Liberation Mono" font-size="24" stroke-width="0.35" style="text-decoration-skip-ink:none" xml:space="preserve"><tspan fill="#6a6a6a" stroke="#6a6a6a" font-style="italic">// New state structure</tspan></text></g><g clip-path="url(#chatclip)"><text x="1536" y="959.5" transform="matrix(1 0 0 1.08 0 -76.76)" font-family="Liberation Mono" font-size="24" stroke-width="0.35" style="text-decoration-skip-ink:none" xml:space="preserve"><tspan fill="#d6d6dd" stroke="#d6d6dd">#</tspan><tspan fill="#ffd700" stroke="#ffd700">[</tspan><tspan fill="#d6d6dd" stroke="#d6d6dd">derive</tspan><tspan fill="#da70d6" stroke="#da70d6">(</tspan><tspan fill="#efb080" stroke="#efb080">BorshSerialize</tspan><tspan fill="#d6d6dd" stroke="#d6d6dd">, </tspan><tspan fill="#efb080" stroke="#efb080">BorshDeserialize</tspan><tspan fill="#da70d6" stroke="#da70d6">)</tspan><tspan fill="#ffd700" stroke="#ffd700">]</tspan></text></g><g clip-path="url(#chatclip)"><text x="1536" y="995.5" transform="matrix(1 0 0 1.08 0 -79.64)" font-family="Liberation Mono" font-size="24" stroke-width="0.35" style="text-decoration-skip-ink:none" xml:space="preserve"><tspan fill="#83d6c5" stroke="#83d6c5">pub</tspan><tspan fill="#d6d6dd" stroke="#d6d6dd"> </tspan><tspan fill="#83d6c5" stroke="#83d6c5">struct</tspan><tspan fill="#d6d6dd" stroke="#d6d6dd"> </tspan><tspan fill="#efb080" stroke="#efb080">NewState</tspan><tspan fill="#d6d6dd" stroke="#d6d6dd"> </tspan><tspan fill="#ffd700" stroke="#ffd700">{</tspan></text></g><g clip-path="url(#chatclip)"><text x="1536" y="1031.5" transform="matrix(1 0 0 1.08 0 -82.52)" font-family="Liberation Mono" font-size="24" stroke-width="0.35" style="text-decoration-skip-ink:none" xml:space="preserve"><tspan fill="#d6d6dd" stroke="#d6d6dd">    </tspan><tspan fill="#83d6c5" stroke="#83d6c5">pub</tspan><tspan fill="#d6d6dd" stroke="#d6d6dd"> field1: </tspan><tspan fill="#efb080" stroke="#efb080">String</tspan><tspan fill="#d6d6dd" stroke="#d6d6dd">,</tspan></text></g><g clip-path="url(#chatclip)"><text x="1536" y="1067.5" transform="matrix(1 0 0 1.08 0 -85.40)" font-family="Liberation Mono" font-size="24" stroke-width="0.35" style="text-decoration-skip-ink:none" xml:space="preserve"><tspan fill="#d6d6dd" stroke="#d6d6dd">    </tspan><tspan fill="#83d6c5" stroke="#83d6c5">pub</tspan><tspan fill="#d6d6dd" stroke="#d6d6dd"> field2: </tspan><tspan fill="#efb080" stroke="#efb080">u64</tspan><tspan fill="#d6d6dd" stroke="#d6d6dd">,</tspan></text></g><g clip-path="url(#chatclip)"><text x="1536" y="1103.5" transform="matrix(1 0 0 1.08 0 -88.28)" font-family="Liberation Mono" font-size="24" stroke-width="0.35" style="text-decoration-skip-ink:none" xml:space="preserve"><tspan fill="#d6d6dd" stroke="#d6d6dd">    </tspan><tspan fill="#83d6c5" stroke="#83d6c5">pub</tspan><tspan fill="#d6d6dd" stroke="#d6d6dd"> field3: </tspan><tspan fill="#efb080" stroke="#efb080">Vec</tspan><tspan fill="#d6d6dd" stroke="#d6d6dd">&lt;</tspan><tspan fill="#efb080" stroke="#efb080">String</tspan><tspan fill="#d6d6dd" stroke="#d6d6dd">&gt;, </tspan><tspan fill="#6a6a6a" stroke="#6a6a6a" font-style="italic">// New field</tspan></text></g><g clip-path="url(#chatclip)"><text x="1536" y="1139.5" transform="matrix(1 0 0 1.08 0 -91.16)" font-family="Liberation Mono" font-size="24" stroke-width="0.35" style="text-decoration-skip-ink:none" xml:space="preserve"><tspan fill="#ffd700" stroke="#ffd700">}</tspan></text></g><g clip-path="url(#chatclip)"><text x="1536" y="1211.5" transform="matrix(1 0 0 1.08 0 -96.92)" font-family="Liberation Mono" font-size="24" stroke-width="0.35" style="text-decoration-skip-ink:none" xml:space="preserve"><tspan fill="#d6d6dd" stroke="#d6d6dd">#</tspan><tspan fill="#ffd700" stroke="#ffd700">[</tspan><tspan fill="#d6d6dd" stroke="#d6d6dd">near_bindgen</tspan><tspan fill="#ffd700" stroke="#ffd700">]</tspan></text></g><g clip-path="url(#chatclip)"><text x="1536" y="1247.5" transform="matrix(1 0 0 1.08 0 -99.80)" font-family="Liberation Mono" font-size="24" stroke-width="0.35" style="text-decoration-skip-ink:none" xml:space="preserve"><tspan fill="#83d6c5" stroke="#83d6c5">impl</tspan><tspan fill="#d6d6dd" stroke="#d6d6dd"> </tspan><tspan fill="#efb080" stroke="#efb080">Contract</tspan><tspan fill="#d6d6dd" stroke="#d6d6dd"> </tspan><tspan fill="#ffd700" stroke="#ffd700">{</tspan></text></g><g clip-path="url(#chatclip)"><text x="1536" y="1283.5" transform="matrix(1 0 0 1.08 0 -102.68)" font-family="Liberation Mono" font-size="24" stroke-width="0.35" style="text-decoration-skip-ink:none" xml:space="preserve"><tspan fill="#d6d6dd" stroke="#d6d6dd">    #</tspan><tspan fill="#da70d6" stroke="#da70d6">[</tspan><tspan fill="#d6d6dd" stroke="#d6d6dd">init</tspan><tspan fill="#179fff" stroke="#179fff">(</tspan><tspan fill="#d6d6dd" stroke="#d6d6dd">ignore_state</tspan><tspan fill="#179fff" stroke="#179fff">)</tspan><tspan fill="#da70d6" stroke="#da70d6">]</tspan></text></g><g clip-path="url(#chatclip)"><text x="1536" y="1319.5" transform="matrix(1 0 0 1.08 0 -105.56)" font-family="Liberation Mono" font-size="24" stroke-width="0.35" style="text-decoration-skip-ink:none" xml:space="preserve"><tspan fill="#d6d6dd" stroke="#d6d6dd">    </tspan><tspan fill="#83d6c5" stroke="#83d6c5">pub</tspan><tspan fill="#d6d6dd" stroke="#d6d6dd"> </tspan><tspan fill="#83d6c5" stroke="#83d6c5">fn</tspan><tspan fill="#d6d6dd" stroke="#d6d6dd"> </tspan><tspan fill="#efb080" stroke="#efb080">migrate</tspan><tspan fill="#da70d6" stroke="#da70d6">()</tspan><tspan fill="#d6d6dd" stroke="#d6d6dd"> </tspan><tspan fill="#da70d6" stroke="#da70d6">{</tspan></text></g><rect x="2202" y="545" width="16" height="16" rx="3" stroke="#666" stroke-width="1.6" fill="none"/><rect x="2206.5" y="549.5" width="16" height="16.5" rx="3" stroke="#666" stroke-width="1.6" fill="none"/><path d="M1539.5 1343.8m-4.5 0a4.5 4.5 0 1 0 9 0a4.5 4.5 0 1 0 -9 0M1544 1340v5.5q0 2.5 2.2 2.5q2.8 0 2.8-4.5a9.3 9.3 0 1 0 -3.8 7.6" stroke="#9a9a9a" stroke-width="1.8" fill="none"/><path d="M1589 1335V1353M1580 1344H1598" stroke="#7a7a7a" stroke-width="1.8"/><text x="1611" y="1353" font-family="Liberation Sans" font-size="25" fill="#7a7a7a" font-weight="400" stroke="#7a7a7a" stroke-width="0.6" textLength="91" lengthAdjust="spacingAndGlyphs" >Browser</text><path d="M1742 1338.5Q1737 1336 1732.5 1338V1351Q1737 1349 1742 1351.5Q1747 1349 1751.5 1351V1338Q1747 1336 1742 1338.5ZM1742 1338.5V1351.5" stroke="#9a9a9a" stroke-width="1.6" fill="none" stroke-linejoin="round"/><text x="1763" y="1353" font-family="Liberation Sans" font-size="25" fill="#e4e4e4" font-weight="400" stroke="#e4e4e4" stroke-width="0.6" textLength="164" lengthAdjust="spacingAndGlyphs" >NEAR Protocol</text><text x="2133" y="1351" font-family="Liberation Sans" font-size="24" fill="#7a7a7a" font-weight="400" stroke="#7a7a7a" stroke-width="0.3" textLength="68" lengthAdjust="spacingAndGlyphs" >12.4%</text><circle cx="2224" cy="1342" r="10.8" stroke="#555" stroke-width="2.4" fill="none"/><path d="M2226.5 1331.5A10.8 10.8 0 0 1 2233 1336" stroke="#cfcfcf" stroke-width="2.4" fill="none"/><text x="1521" y="1405" font-family="Liberation Sans" font-size="26" fill="#585858" font-weight="400" stroke="#585858" stroke-width="0.3" textLength="332" lengthAdjust="spacingAndGlyphs" >Plan, search, build anything</text><path d="M1548.8 1478C1545.5 1473 1536.5 1472.5 1536.5 1478C1536.5 1483.5 1545.5 1483 1548.8 1478C1552 1473 1561.5 1472.5 1561.5 1478C1561.5 1483.5 1552 1483 1548.8 1478Z" stroke="#8a8a8a" stroke-width="2.2" fill="none"/><text x="1570" y="1486" font-family="Liberation Sans" font-size="25" fill="#ababab" font-weight="400" stroke="#ababab" stroke-width="0.6" textLength="66" lengthAdjust="spacingAndGlyphs" >Agent</text><text x="1646" y="1486" font-family="Liberation Mono" font-size="17" fill="#7a7a7a" font-weight="400" textLength="26" lengthAdjust="spacingAndGlyphs" >⌘I</text><path d="M1684.5 1480.5L1690.3 1474.5L1696 1480.5" stroke="#8a8a8a" stroke-width="1.6" fill="none"/><text x="1729" y="1486" font-family="Liberation Sans" font-size="25" fill="#8e8e8e" font-weight="400" stroke="#8e8e8e" stroke-width="0.6" textLength="51" lengthAdjust="spacingAndGlyphs" >Auto</text><path d="M1792 1480.5L1798 1474.5L1804 1480.5" stroke="#7a7a7a" stroke-width="1.6" fill="none"/><rect x="2157" y="1470.5" width="23" height="17" rx="2.5" stroke="#8a8a8a" stroke-width="1.8" fill="none"/><circle cx="2163.5" cy="1476" r="2" fill="#8a8a8a"/><path d="M2158 1486L2165 1480L2170 1484L2174 1481L2179 1486Z" fill="#8a8a8a"/><path d="M2222 1487.5V1469M2214.5 1476.5L2222 1469L2229.5 1476.5" stroke="#141414" stroke-width="2.4" fill="none"/><path d="M7.5 1553L15.5 1561L7.5 1568.5M24 1546L17 1553L24 1561" stroke="#8a8a8a" stroke-width="1.6" fill="none"/><circle cx="79.7" cy="1558" r="11.2" stroke="#d4d4d4" stroke-width="1.8" fill="none"/><path d="M75 1553.3L84.4 1562.7M84.4 1553.3L75 1562.7" stroke="#d4d4d4" stroke-width="1.6"/><text x="103" y="1567" font-family="Liberation Sans" font-size="24" fill="#d4d4d4" font-weight="400" stroke="#d4d4d4" stroke-width="0.3" textLength="13" lengthAdjust="spacingAndGlyphs" >1</text><path d="M136.8 1546.5L148.3 1567.5H125.3Z" stroke="#d4d4d4" stroke-width="1.8" fill="none" stroke-linejoin="round"/><path d="M136.8 1554V1561M136.8 1563V1565" stroke="#d4d4d4" stroke-width="2"/><text x="158" y="1567" font-family="Liberation Sans" font-size="24" fill="#d4d4d4" font-weight="400" stroke="#d4d4d4" stroke-width="0.3" textLength="14" lengthAdjust="spacingAndGlyphs" >0</text><text x="1403" y="1567" font-family="Liberation Sans" font-size="23" fill="#7f7f7f" font-weight="400" stroke="#7f7f7f" stroke-width="0.3" textLength="122" lengthAdjust="spacingAndGlyphs" >Cursor Tab</text><path d="M1402 1558.7H1526" stroke="#7f7f7f" stroke-width="1.6"/><text x="1558" y="1567" font-family="Liberation Sans" font-size="23" fill="#d8d8d8" font-weight="400" stroke="#d8d8d8" stroke-width="0.3" textLength="135" lengthAdjust="spacingAndGlyphs" >Ln 35, Col 1</text><text x="1728" y="1567" font-family="Liberation Sans" font-size="23" fill="#d8d8d8" font-weight="400" stroke="#d8d8d8" stroke-width="0.3" textLength="110" lengthAdjust="spacingAndGlyphs" >Spaces: 2</text><text x="1871" y="1567" font-family="Liberation Sans" font-size="23" fill="#d8d8d8" font-weight="400" stroke="#d8d8d8" stroke-width="0.3" textLength="73" lengthAdjust="spacingAndGlyphs" >UTF-8</text><text x="1977" y="1567" font-family="Liberation Sans" font-size="23" fill="#d8d8d8" font-weight="400" stroke="#d8d8d8" stroke-width="0.3" textLength="26" lengthAdjust="spacingAndGlyphs" >LF</text><text x="2034" y="1567" font-family="Liberation Sans" font-size="23" fill="#d8d8d8" font-weight="400" stroke="#d8d8d8" stroke-width="0.3" textLength="23" lengthAdjust="spacingAndGlyphs" >{ }</text><text x="2072" y="1567" font-family="Liberation Sans" font-size="23" fill="#d8d8d8" font-weight="400" stroke="#d8d8d8" stroke-width="0.3" textLength="121" lengthAdjust="spacingAndGlyphs" >TypeScript</text><path d="M2236.3 1546.8C2231.5 1546.8 2229.5 1550 2229.5 1554.5V1560L2227 1566H2245.5L2243 1560V1554.5C2243 1550 2241 1546.8 2236.3 1546.8ZM2233.5 1566.5A2.8 2.8 0 0 0 2239 1566.5" stroke="#dcdcdc" stroke-width="1.8" fill="none" stroke-linejoin="round"/>
</svg>
</body></html>
